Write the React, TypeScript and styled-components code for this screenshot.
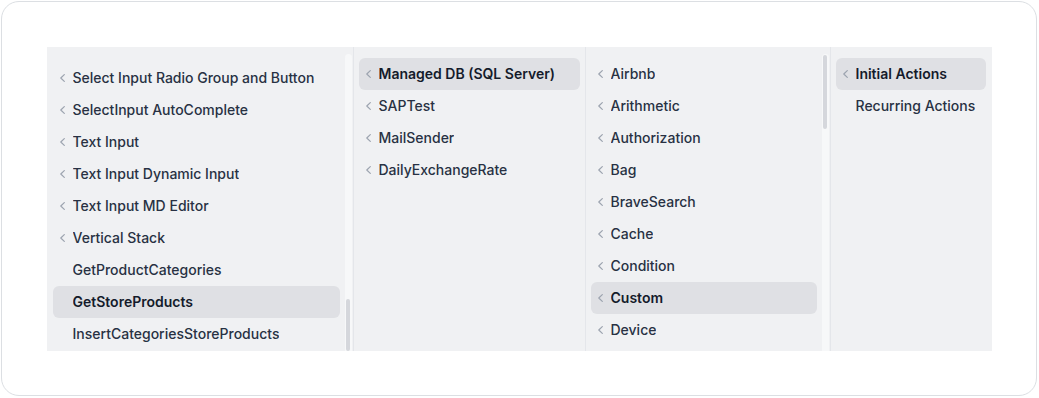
import React from 'react';
import styled, { createGlobalStyle } from 'styled-components';

const GlobalStyle = createGlobalStyle`
  html, body {
    margin: 0;
    padding: 0;
    background: #ffffff;
  }
  body {
    font-family: Inter, 'Noto Sans', sans-serif;
    -webkit-font-smoothing: antialiased;
  }
`;

const Page = styled.div`
  width: 1039px;
  height: 398px;
  padding: 1px 2px 2px 1px;
  box-sizing: border-box;
`;

const Card = styled.div`
  height: 100%;
  box-sizing: border-box;
  border: 1.5px solid #dcdfe3;
  border-radius: 18px;
  padding: 44.5px 44.5px 43.5px 44.5px;
  display: flex;
  flex-direction: column;
`;

const Browser = styled.div`
  display: flex;
  height: 304px;
  background: #f0f1f3;
  overflow: hidden;
`;

const Column = styled.div<{ $width: number; $first?: boolean }>`
  flex: 0 0 ${(p) => p.$width}px;
  display: flex;
  border-left: 1px solid ${(p) => (p.$first ? 'transparent' : '#e4e6ea')};
  box-sizing: border-box;
  min-width: 0;
`;

const List = styled.ul<{ $offset: number }>`
  flex: 1;
  min-width: 0;
  list-style: none;
  margin: 0;
  padding: ${(p) => p.$offset}px 5px 0 5px;
  overflow: hidden;
`;

const Item = styled.li<{ $active?: boolean }>`
  display: flex;
  align-items: center;
  height: 32px;
  padding-left: 7px;
  border-radius: 6px;
  background: ${(p) => (p.$active ? '#dfe0e4' : 'transparent')};
  color: ${(p) => (p.$active ? '#141b2b' : '#283143')};
  font-size: 14px;
  font-weight: ${(p) => (p.$active ? 600 : 500)};
  white-space: nowrap;
`;

const ChevronSlot = styled.span`
  flex: 0 0 13px;
  display: flex;
  align-items: center;
  height: 100%;
`;

const Label = styled.span`
  overflow: hidden;
  text-overflow: ellipsis;
`;

const Track = styled.div`
  flex: 0 0 7px;
  margin: 7px 1px 0 0;
  border-radius: 4px 4px 0 0;
  background: #f7f8f9;
  display: flex;
  flex-direction: column;
  align-items: center;
`;

const Thumb = styled.div`
  width: 4px;
  border-radius: 3px;
  background: #d5d7dc;
`;

type Entry = { label: string; nested?: boolean; active?: boolean };

type ColumnData = {
  width: number;
  offset: number;
  entries: Entry[];
  scroll?: { top: number; height: number };
};

const columns: ColumnData[] = [
  {
    width: 306,
    offset: 15,
    scroll: { top: 245, height: 52 },
    entries: [
      { label: 'Select Input Radio Group and Button', nested: true },
      { label: 'SelectInput AutoComplete', nested: true },
      { label: 'Text Input', nested: true },
      { label: 'Text Input Dynamic Input', nested: true },
      { label: 'Text Input MD Editor', nested: true },
      { label: 'Vertical Stack', nested: true },
      { label: 'GetProductCategories' },
      { label: 'GetStoreProducts', active: true },
      { label: 'InsertCategoriesStoreProducts' },
    ],
  },
  {
    width: 232,
    offset: 11,
    entries: [
      { label: 'Managed DB (SQL Server)', nested: true, active: true },
      { label: 'SAPTest', nested: true },
      { label: 'MailSender', nested: true },
      { label: 'DailyExchangeRate', nested: true },
    ],
  },
  {
    width: 245,
    offset: 11,
    scroll: { top: 1, height: 74 },
    entries: [
      { label: 'Airbnb', nested: true },
      { label: 'Arithmetic', nested: true },
      { label: 'Authorization', nested: true },
      { label: 'Bag', nested: true },
      { label: 'BraveSearch', nested: true },
      { label: 'Cache', nested: true },
      { label: 'Condition', nested: true },
      { label: 'Custom', nested: true, active: true },
      { label: 'Device', nested: true },
    ],
  },
  {
    width: 161,
    offset: 11,
    entries: [
      { label: 'Initial Actions', nested: true, active: true },
      { label: 'Recurring Actions' },
    ],
  },
];

function Chevron() {
  return (
    <svg width="5" height="8" viewBox="0 0 5 8" fill="none">
      <polyline
        points="4.3,0.6 0.8,4 4.3,7.4"
        stroke="#9ca3af"
        strokeWidth="1.2"
        strokeLinecap="round"
        strokeLinejoin="round"
      />
    </svg>
  );
}

export default function App(): JSX.Element {
  return (
    <>
      <GlobalStyle />
      <Page>
        <Card>
          <Browser>
            {columns.map((col, i) => (
              <Column key={i} $width={col.width} $first={i === 0}>
                <List $offset={col.offset}>
                  {col.entries.map((entry) => (
                    <Item key={entry.label} $active={entry.active}>
                      <ChevronSlot>{entry.nested && <Chevron />}</ChevronSlot>
                      <Label>{entry.label}</Label>
                    </Item>
                  ))}
                </List>
                {col.scroll && (
                  <Track>
                    <Thumb
                      style={{
                        marginTop: col.scroll.top,
                        height: col.scroll.height,
                      }}
                    />
                  </Track>
                )}
              </Column>
            ))}
          </Browser>
        </Card>
      </Page>
    </>
  );
}
